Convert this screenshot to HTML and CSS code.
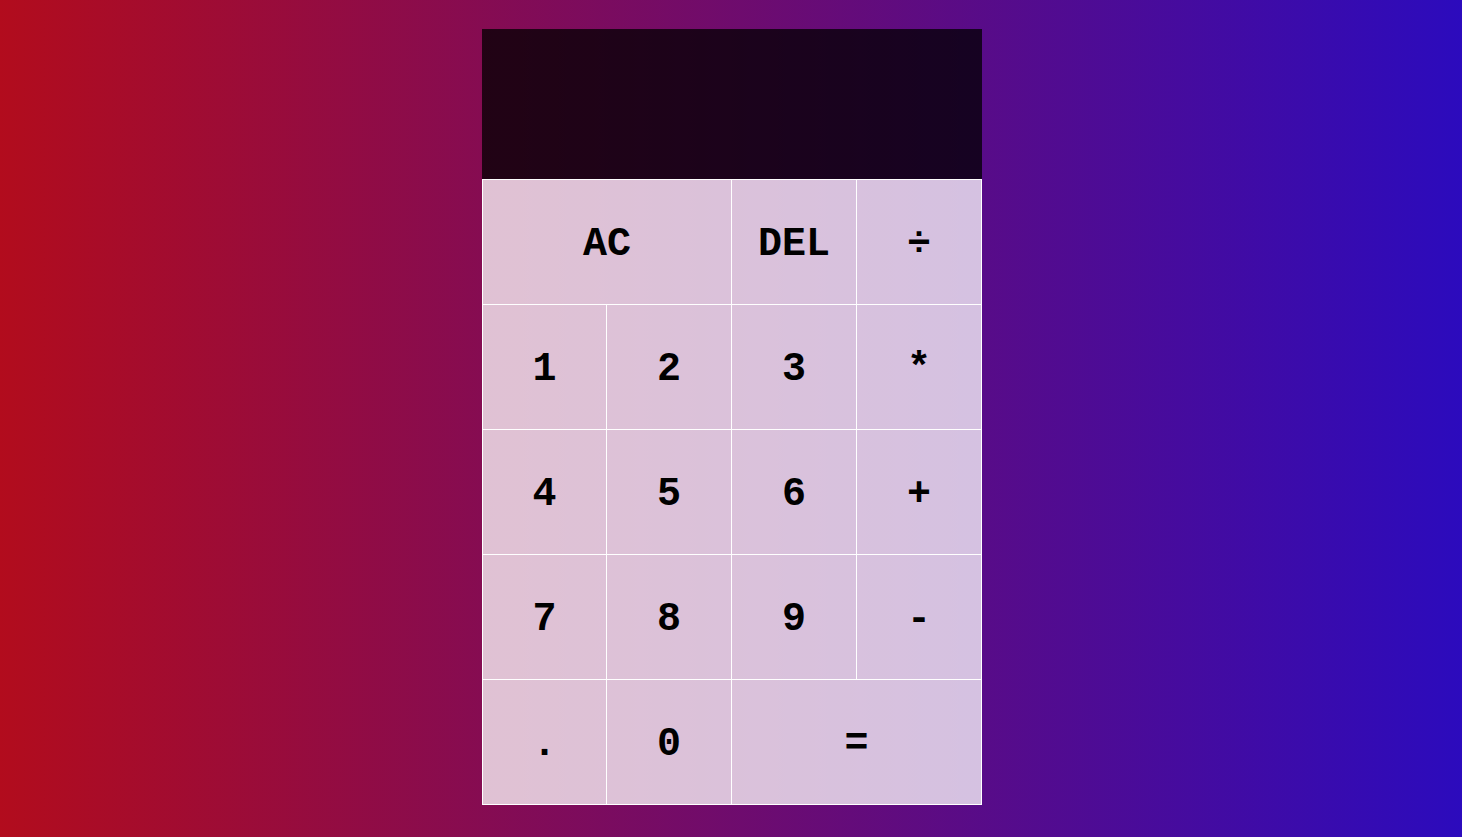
FILE: index.html
```html
<!DOCTYPE html>
<html lang="en">
<head>
<meta charset="utf-8">
<title>Calculator</title>
<link rel="stylesheet" href="styles.css">
</head>
<body>
<div class="calculator">
  <div class="output">
    <div class="previous-operand"></div>
    <div class="current-operand"></div>
  </div>
  <div class="keys">
    <button class="key span-two">AC</button>
    <button class="key">DEL</button>
    <button class="key">÷</button>
    <button class="key">1</button>
    <button class="key">2</button>
    <button class="key">3</button>
    <button class="key">*</button>
    <button class="key">4</button>
    <button class="key">5</button>
    <button class="key">6</button>
    <button class="key">+</button>
    <button class="key">7</button>
    <button class="key">8</button>
    <button class="key">9</button>
    <button class="key">-</button>
    <button class="key">.</button>
    <button class="key">0</button>
    <button class="key span-two">=</button>
  </div>
</div>
</body>
</html>
```
FILE: styles.css
```css
*, *::before, *::after {
  box-sizing: border-box;
}

html, body {
  margin: 0;
  height: 100%;
}

body {
  background: linear-gradient(to right, #b20c1d, #2c0bbd);
  font-family: "Liberation Mono", monospace;
  font-weight: bold;
  overflow: hidden;
}

.calculator {
  width: 500px;
  margin: 29px 0 0 calc(50% - 249px);
}

.output {
  height: 150px;
  background: rgba(0, 0, 0, 0.75);
}

.keys {
  display: grid;
  grid-template-columns: 124px 125px 125px 125px;
  grid-auto-rows: 125px;
  border-left: 1px solid #fff;
  border-top: 1px solid #fff;
  width: 500px;
}

.key {
  font-family: "Liberation Mono", monospace;
  font-weight: bold;
  font-size: 40px;
  color: #000;
  background: rgba(255, 255, 255, 0.75);
  border: none;
  border-right: 1px solid #fff;
  border-bottom: 1px solid #fff;
  padding: 4px 0 0;
  outline: none;
  cursor: pointer;
}

.span-two {
  grid-column: span 2;
}
```
